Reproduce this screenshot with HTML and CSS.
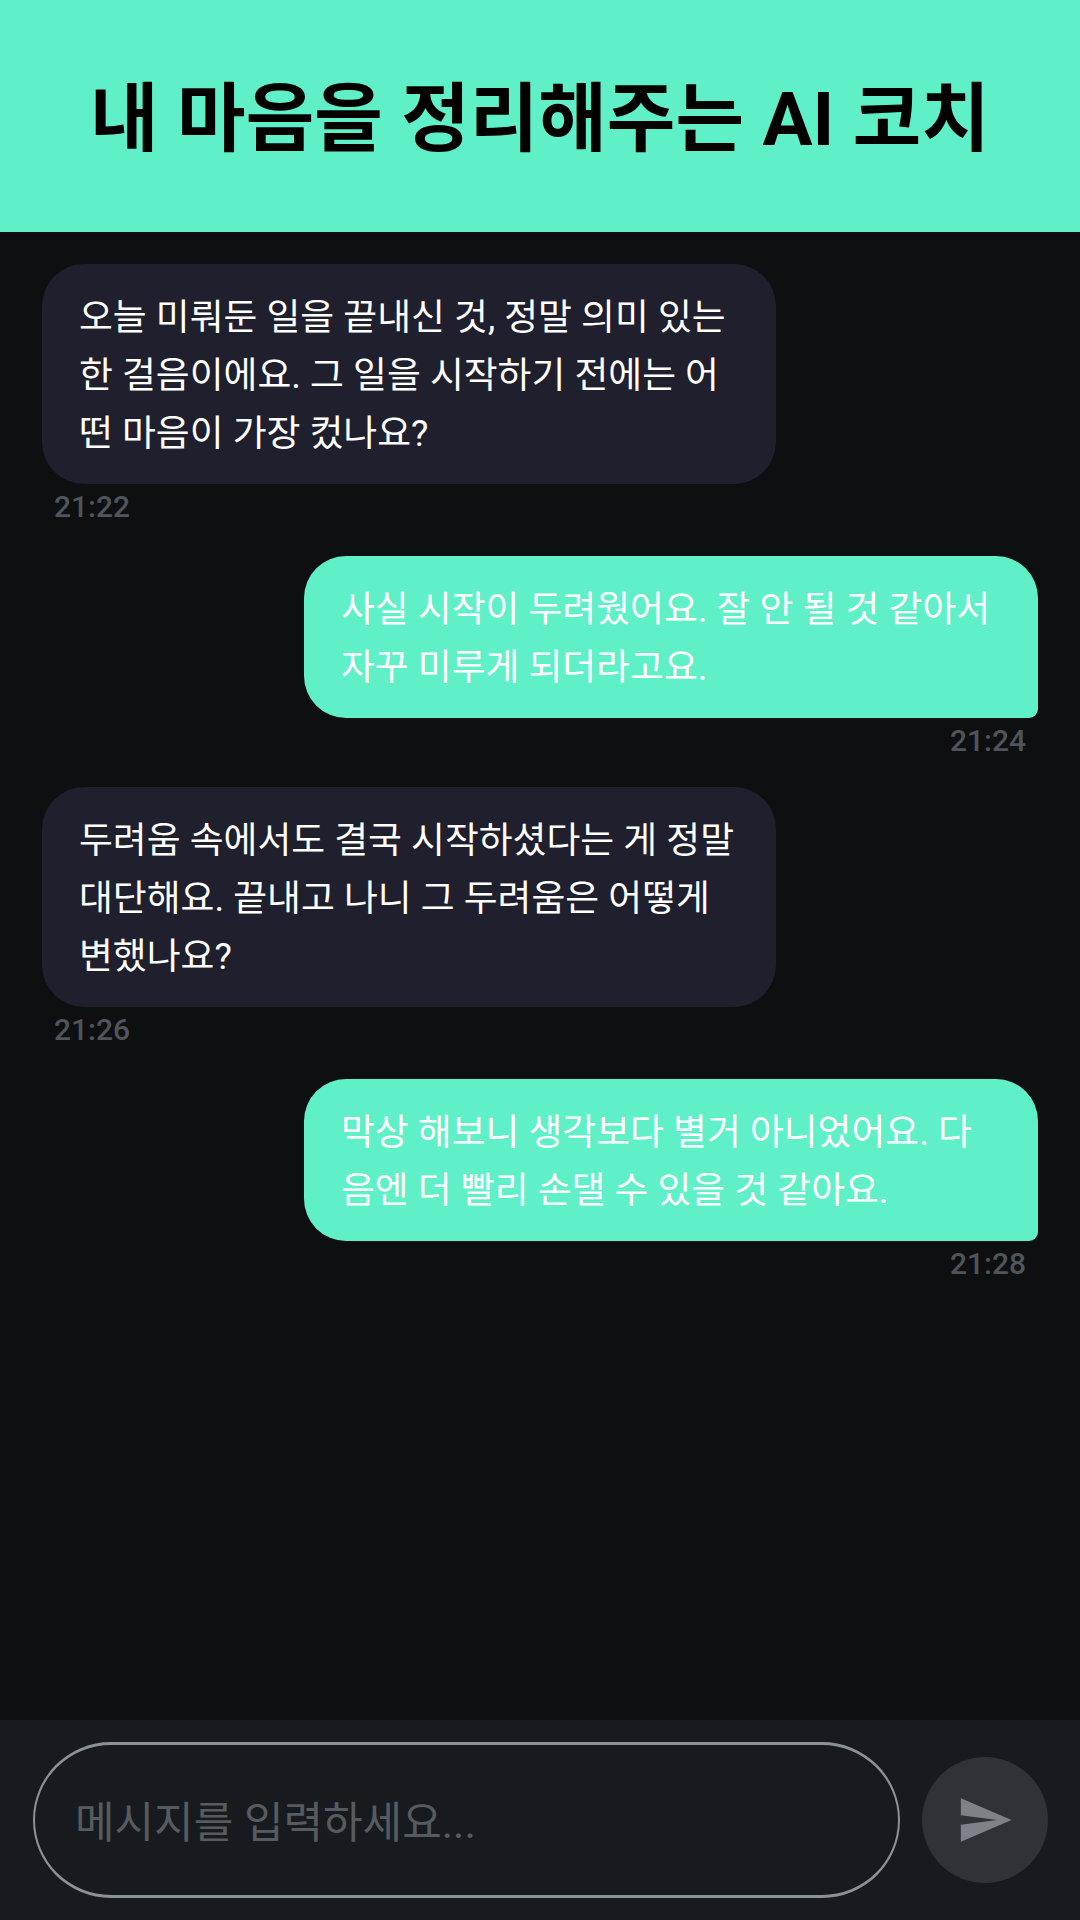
FILE: index.html
```html
<!DOCTYPE html>
<html lang="ko">
<head>
<meta charset="utf-8">
<title>내 마음을 정리해주는 AI 코치</title>
<link rel="stylesheet" href="styles.css">
</head>
<body>
<div class="app">
  <header class="header"><h1 class="title">내 마음을 정리해주는 AI 코치</h1></header>
  <main class="messages">
    <div class="msg msg-ai">
      <div class="bubble">오늘 미뤄둔 일을 끝내신 것, 정말 의미 있는 한 걸음이에요. 그 일을 시작하기 전에는 어떤 마음이 가장 컸나요?</div>
      <div class="time">21:22</div>
    </div>
    <div class="msg msg-user">
      <div class="bubble">사실 시작이 두려웠어요. 잘 안 될 것 같아서 자꾸 미루게 되더라고요.</div>
      <div class="time">21:24</div>
    </div>
    <div class="msg msg-ai">
      <div class="bubble">두려움 속에서도 결국 시작하셨다는 게 정말 대단해요. 끝내고 나니 그 두려움은 어떻게 변했나요?</div>
      <div class="time">21:26</div>
    </div>
    <div class="msg msg-user">
      <div class="bubble">막상 해보니 생각보다 별거 아니었어요. 다음엔 더 빨리 손댈 수 있을 것 같아요.</div>
      <div class="time">21:28</div>
    </div>
  </main>
  <footer class="composer">
    <input class="field" type="text" placeholder="메시지를 입력하세요...">
    <button class="send" type="button" aria-label="보내기">
      <svg class="send-icon" viewBox="0 0 24 24"><path d="M2.01 21L23 12 2.01 3 2 10l15 2-15 2z"/></svg>
    </button>
  </footer>
</div>
</body>
</html>
```

FILE: styles.css
```css
* { box-sizing: border-box; }
html, body { margin: 0; padding: 0; }
body {
  background: #0e0f11;
  font-family: Roboto, "Noto Sans CJK KR", sans-serif;
}
.app {
  width: 1080px;
  height: 1920px;
  display: flex;
  flex-direction: column;
  overflow: hidden;
}
.header {
  height: 232px;
  background: #5ff0c8;
  display: flex;
  align-items: center;
  justify-content: center;
  flex: none;
  padding-top: 8px;
}
.title {
  margin: 0;
  color: #000;
  font-size: 74.5px;
  font-weight: 700;
  line-height: 1;
}
.messages {
  flex: 1;
  padding: 32px 42px 0;
  display: flex;
  flex-direction: column;
}
.msg {
  display: flex;
  flex-direction: column;
  width: 734px;
  margin-bottom: 30.6px;
}
.msg-user { align-self: flex-end; align-items: flex-end; margin-bottom: 28.6px; }
.bubble {
  width: 100%;
  padding: 25px 39px 21px 37px;
  border-radius: 42px;
  font-size: 36.8px;
  line-height: 58px;
  color: #fff;
}
.msg-ai .bubble { background: #1f1f2d; }
.msg-user .bubble {
  background: #5ff0c8;
  border-bottom-right-radius: 9px;
}
.time {
  margin: 5px 12px 0;
  font-size: 30px;
  line-height: 36px;
  font-weight: 500;
  color: #4f555b;
}
.composer {
  height: 200px;
  flex: none;
  background: #171b1f;
  padding: 0 32px 0 33px;
  display: flex;
  align-items: center;
  gap: 22px;
}
.field {
  flex: 1;
  height: 156px;
  border-style: solid;
  border-color: #8a9299;
  border-width: 3px 2px;
  border-radius: 78px;
  background: transparent;
  padding: 6px 40px 0;
  font: 400 43px Roboto, "Noto Sans CJK KR", sans-serif;
  color: #fff;
  outline: none;
}
.field::placeholder { color: #565b60; opacity: 1; }
.send {
  width: 126px;
  height: 126px;
  flex: none;
  border: 0;
  border-radius: 50%;
  background: #2f3236;
  padding: 0;
  display: flex;
  align-items: center;
  justify-content: center;
}
.send-icon { width: 58px; height: 58px; fill: #7c8287; }
```
